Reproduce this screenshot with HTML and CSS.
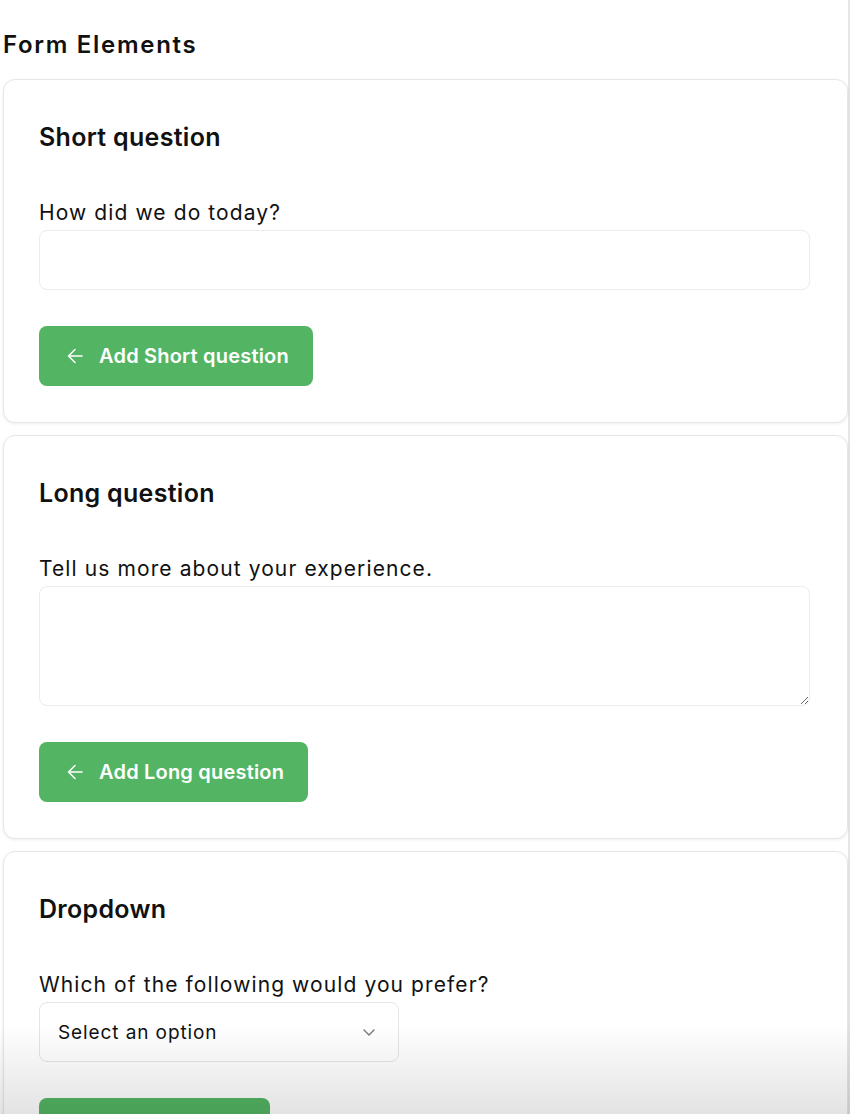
FILE: index.html
```html
<!DOCTYPE html>
<html lang="en">
<head>
  <meta charset="UTF-8">
  <meta name="viewport" content="width=device-width, initial-scale=1.0">
  <title>Form Elements</title>
  <link rel="stylesheet" href="styles.css">
</head>
<body>
  <div class="page">
    <h1>Form Elements</h1>

    <div class="element-card">
      <h2>Short question</h2>
      <label class="field-label" for="shortAnswer">How did we do today?</label>
      <input type="text" id="shortAnswer" class="field-input" />
      <button type="button" class="add-btn">
        <svg width="16" height="16" viewBox="0 0 16 16" fill="none" stroke="currentColor" stroke-width="1.5" stroke-linecap="round" stroke-linejoin="round"><path d="M15 8H1.5M8 1.5L1.5 8L8 14.5"/></svg>
        Add Short question
      </button>
    </div>

    <div class="element-card">
      <h2>Long question</h2>
      <label class="field-label" for="longAnswer">Tell us more about your experience.</label>
      <textarea id="longAnswer" class="field-input field-textarea"></textarea>
      <button type="button" class="add-btn">
        <svg width="16" height="16" viewBox="0 0 16 16" fill="none" stroke="currentColor" stroke-width="1.5" stroke-linecap="round" stroke-linejoin="round"><path d="M15 8H1.5M8 1.5L1.5 8L8 14.5"/></svg>
        Add Long question
      </button>
    </div>

    <div class="element-card">
      <h2>Dropdown</h2>
      <label class="field-label" for="choice">Which of the following would you prefer?</label>
      <div class="select-wrap">
        <select id="choice" class="field-select">
          <option>Select an option</option>
          <option>Option A</option>
          <option>Option B</option>
        </select>
        <svg class="select-chevron" width="16" height="16" viewBox="0 0 16 16" fill="none" stroke="currentColor" stroke-width="1.4" stroke-linecap="round" stroke-linejoin="round"><path d="M3 6l5 5 5-5"/></svg>
      </div>
      <button type="button" class="add-btn">
        <svg width="16" height="16" viewBox="0 0 16 16" fill="none" stroke="currentColor" stroke-width="1.5" stroke-linecap="round" stroke-linejoin="round"><path d="M15 8H1.5M8 1.5L1.5 8L8 14.5"/></svg>
        Add Dropdown
      </button>
    </div>
  </div>

  <div class="bottom-fade"></div>
</body>
</html>
```

FILE: styles.css
```css
body {
  font-family: Inter, "Noto Sans", Arial, sans-serif;
  margin: 0;
  padding: 0;
  background-color: #ffffff;
  color: #111111;
}

.page {
  width: 850px;
  min-height: 100vh;
  box-sizing: border-box;
  padding: 0 0 40px 3px;
  border-right: 2px solid #e6e6e6;
}

h1 {
  font-size: 24px;
  line-height: 32px;
  font-weight: 600;
  letter-spacing: 1.7px;
  margin: 0;
  padding-top: 29px;
  margin-bottom: 18px;
}

.element-card {
  display: flex;
  flex-direction: column;
  align-items: flex-start;
  background-color: #ffffff;
  border: 1px solid #e6e6e6;
  border-radius: 12px;
  box-shadow: 0 1px 3px rgba(0, 0, 0, 0.07);
  padding: 41px 37px 36px 35px;
  margin-bottom: 12px;
}

.element-card h2 {
  font-size: 25px;
  line-height: 32px;
  font-weight: 600;
  letter-spacing: 0.3px;
  margin: 0 0 46px;
}

.field-label {
  font-size: 21px;
  line-height: 28px;
  font-weight: 400;
  letter-spacing: 1.1px;
  margin-bottom: 3px;
}

.field-input {
  width: 100%;
  height: 60px;
  box-sizing: border-box;
  border: 1px solid #ececec;
  border-radius: 8px;
  background-color: #ffffff;
  font-family: inherit;
  font-size: 18px;
  padding: 0 18px;
  outline: none;
  margin: 0 0 36px;
}

.field-textarea {
  height: 120px;
  padding: 14px 18px;
  resize: vertical;
}

.select-wrap {
  position: relative;
  width: 360px;
  margin-bottom: 36px;
}

.field-select {
  appearance: none;
  -webkit-appearance: none;
  width: 100%;
  height: 60px;
  box-sizing: border-box;
  border: 1px solid #e6e6e6;
  border-radius: 8px;
  background-color: #ffffff;
  font-family: inherit;
  font-size: 19px;
  letter-spacing: 0.9px;
  color: #111111;
  padding: 0 18px;
  outline: none;
}

.select-chevron {
  position: absolute;
  right: 22px;
  top: 22px;
  color: #777777;
  pointer-events: none;
}

.add-btn {
  display: flex;
  align-items: center;
  gap: 16px;
  height: 60px;
  padding: 0 24px 0 28px;
  font-family: inherit;
  font-size: 20px;
  font-weight: 600;
  letter-spacing: 0.2px;
  color: #ffffff;
  background-color: #53b563;
  border: none;
  border-radius: 8px;
  cursor: pointer;
}

.add-btn:hover {
  background-color: #47a457;
}

.bottom-fade {
  position: fixed;
  left: 0;
  right: 0;
  bottom: 0;
  height: 90px;
  background: linear-gradient(to bottom, rgba(0, 0, 0, 0), rgba(0, 0, 0, 0.11));
  pointer-events: none;
}
```
